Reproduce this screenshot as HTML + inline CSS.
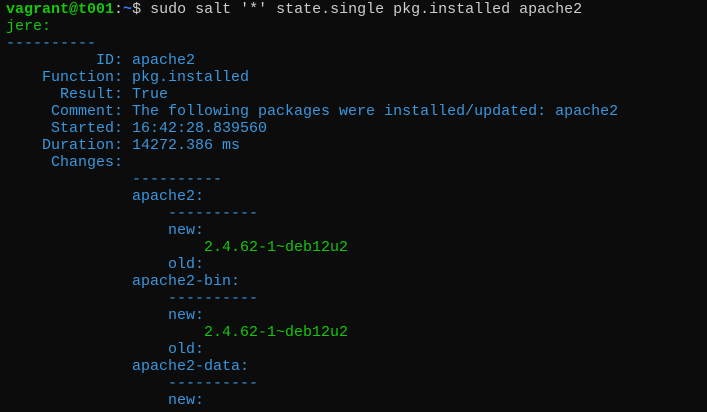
<!DOCTYPE html>
<html><head><style>
html,body{margin:0;padding:0;background:#0c0c0c;width:707px;height:412px;overflow:hidden}
pre{margin:0;padding:1px 0 0 6px;font-family:"Liberation Mono",monospace;font-size:15px;line-height:17px;color:#cccccc;white-space:pre}
.g{color:#16c60c}.gb{color:#16c60c;font-weight:bold}.b{color:#3b78ff;font-weight:bold}.c{color:#3a96dd}
</style></head><body><pre><span class="gb">vagrant@t001</span>:<span class="b">~</span>$ sudo salt '*' state.single pkg.installed apache2
<span class="g">jere:</span>
<span class="c">----------</span>
<span class="c">          ID: apache2</span>
<span class="c">    Function: pkg.installed</span>
<span class="c">      Result: True</span>
<span class="c">     Comment: The following packages were installed/updated: apache2</span>
<span class="c">     Started: 16:42:28.839560</span>
<span class="c">    Duration: 14272.386 ms</span>
<span class="c">     Changes:</span>
<span class="c">              ----------</span>
<span class="c">              apache2:</span>
<span class="c">                  ----------</span>
<span class="c">                  new:</span>
<span class="g">                      2.4.62-1~deb12u2</span>
<span class="c">                  old:</span>
<span class="c">              apache2-bin:</span>
<span class="c">                  ----------</span>
<span class="c">                  new:</span>
<span class="g">                      2.4.62-1~deb12u2</span>
<span class="c">                  old:</span>
<span class="c">              apache2-data:</span>
<span class="c">                  ----------</span>
<span class="c">                  new:</span>
</pre></body></html>
